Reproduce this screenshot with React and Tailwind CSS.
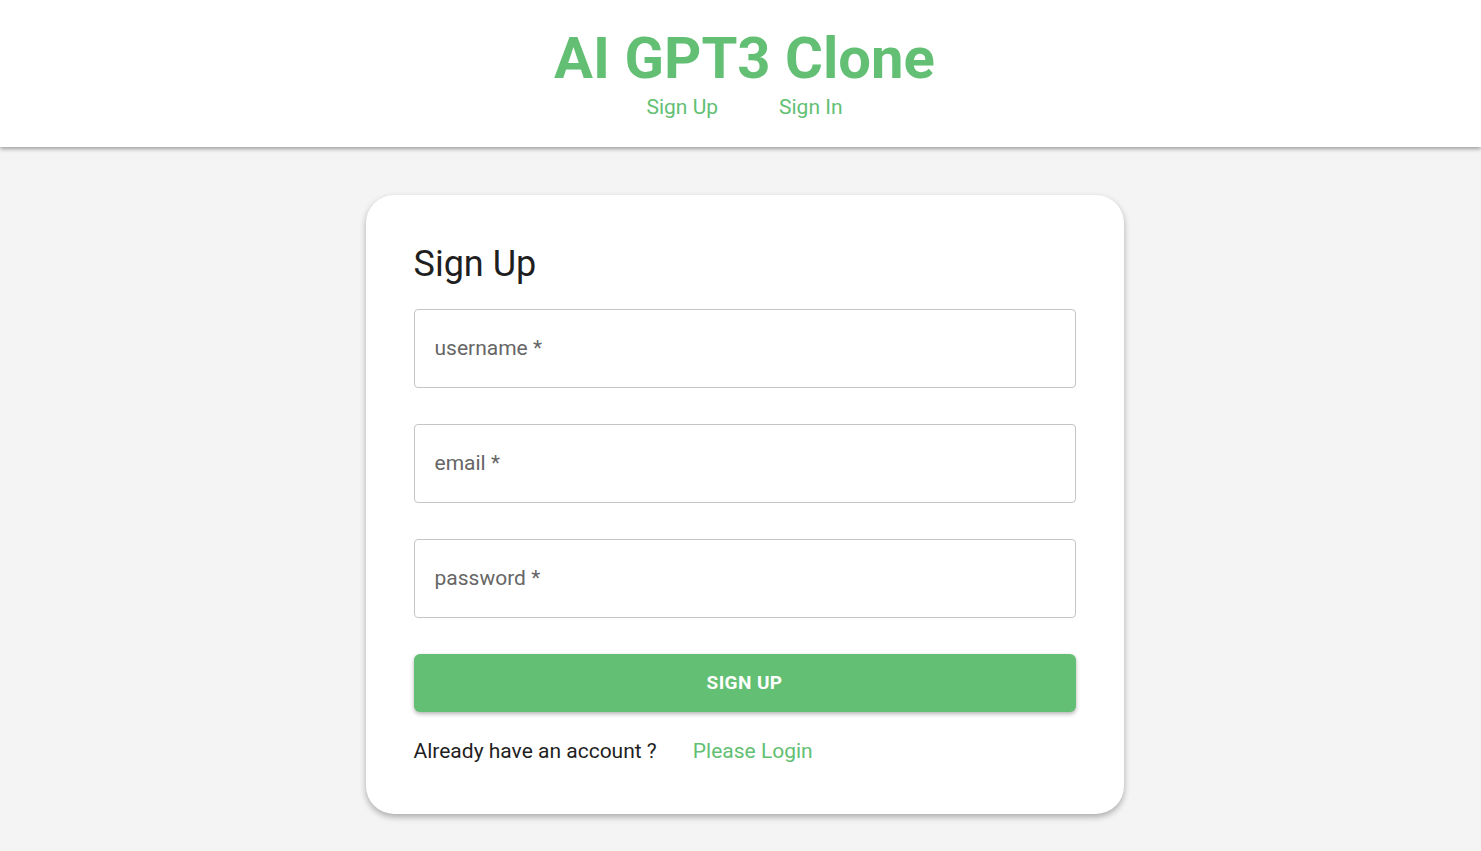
import React from 'react';

function Field({ label }) {
    return (
        <div className="h-[79px] w-full rounded-[4px] border border-[#c4c4c4] bg-white flex items-center px-5">
            <span className="text-[21px] text-[#666666]">{label} *</span>
        </div>
    );
}

export default function App() {
    return (
        <div className="min-h-screen bg-[#f4f4f4] font-['Roboto',sans-serif]">
            <header className="h-[147px] bg-white shadow-[0_2px_4px_rgba(0,0,0,0.35)] flex flex-col items-center pl-[8px]">
                <h1 className="mt-[22px] text-[58px] leading-[72px] font-bold text-[#62bf73]">AI GPT3 Clone</h1>
                <nav className="flex gap-[61px] text-[21px] leading-[24px] text-[#62bf73] mt-[1px]">
                    <a href="#">Sign Up</a>
                    <a href="#">Sign In</a>
                </nav>
            </header>
            <main className="flex justify-center pt-[48px] pb-9 pl-[8px]">
                <div className="w-[758px] bg-white rounded-[28px] shadow-[0_3px_6px_rgba(0,0,0,0.3)] px-12 pt-[44px] pb-[48px]">
                    <h2 className="text-[36px] leading-[50px] text-[#1f1f1f] mb-[20px]">Sign Up</h2>
                    <div className="flex flex-col gap-[36px]">
                        <Field label="username" />
                        <Field label="email" />
                        <Field label="password" />
                    </div>
                    <button className="mt-[36px] w-full h-[58px] rounded-[6px] bg-[#62bf73] text-white font-bold text-[19px] tracking-[0.4px] shadow-[0_2px_4px_rgba(0,0,0,0.3)]">
                        SIGN UP
                    </button>
                    <div className="mt-[24px] flex items-center gap-[36px] text-[21px] leading-[30px]">
                        <span className="text-[#1f1f1f]">Already have an account ?</span>
                        <a href="#" className="text-[#62bf73]">Please Login</a>
                    </div>
                </div>
            </main>
        </div>
    );
}
